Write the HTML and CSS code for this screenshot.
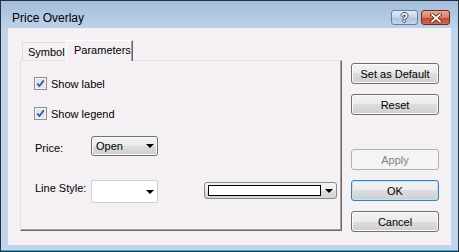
FILE: index.html
```html
<!DOCTYPE html>
<html lang="en">
<head>
  <meta charset="UTF-8">
  <title>Price Overlay</title>
  <link rel="stylesheet" href="styles.css">
</head>
<body>
<!-- Dialog Window -->
<div class="window">

    <!-- Title Bar -->
    <div class="titlebar">
        <span class="title">Price Overlay</span>
        <div class="caption-buttons">
            <span class="cap-btn help">?</span>
            <span class="cap-btn close">
                <svg width="12" height="10" viewBox="0 0 12 10">
                    <path d="M2 1.5 L10 8.5 M10 1.5 L2 8.5" stroke="#5a1e16" stroke-width="3.4" stroke-linecap="square"/>
                    <path d="M2 1.5 L10 8.5 M10 1.5 L2 8.5" stroke="#ffffff" stroke-width="1.8" stroke-linecap="square"/>
                </svg>
            </span>
        </div>
    </div>

    <!-- Client Area -->
    <div class="client">
        <div class="tabset">
            <div class="tabs">
                <div class="tab">Symbol</div>
                <div class="tab active">Parameters</div>
            </div>

            <div class="panel">
                <div class="check-row">
                    <svg class="checkbox" width="13" height="13" viewBox="0 0 13 13">
                        <rect x="0.5" y="0.5" width="12" height="12" fill="#f6f6f6" stroke="#8e8f8f"/>
                        <rect x="2" y="2" width="9" height="9" fill="#e2e5ec"/>
                        <path d="M3.3 6.6 L5.4 9 L9.8 3.4" fill="none" stroke="#3552a8" stroke-width="1.7"/>
                    </svg>
                    <span>Show label</span>
                </div>
                <div class="check-row second">
                    <svg class="checkbox" width="13" height="13" viewBox="0 0 13 13">
                        <rect x="0.5" y="0.5" width="12" height="12" fill="#f6f6f6" stroke="#8e8f8f"/>
                        <rect x="2" y="2" width="9" height="9" fill="#e2e5ec"/>
                        <path d="M3.3 6.6 L5.4 9 L9.8 3.4" fill="none" stroke="#3552a8" stroke-width="1.7"/>
                    </svg>
                    <span>Show legend</span>
                </div>

                <div class="field-row price-row">
                    <span class="field-label">Price:</span>
                    <div class="dropbtn">Open<span class="arrow"></span></div>
                </div>

                <div class="field-row style-row">
                    <span class="field-label">Line Style:</span>
                    <div class="combo"><span class="arrow"></span></div>
                    <div class="color-combo">
                        <span class="swatch"></span>
                        <span class="arrow"></span>
                    </div>
                </div>
            </div>
        </div>

        <!-- Dialog Buttons -->
        <div class="actions">
            <div class="btn">Set as Default</div>
            <div class="btn">Reset</div>
            <div class="btn disabled apply">Apply</div>
            <div class="btn default">OK</div>
            <div class="btn">Cancel</div>
        </div>
    </div>
</div>
</body>
</html>
```

FILE: styles.css
```css
/* Page */
html, body {
  margin: 0;
  padding: 0;
}

body {
  font-family: "Liberation Sans", Arial, sans-serif;
  font-size: 11px;
  color: #000;
}

/* Window frame */
.window {
  width: 459px;
  height: 252px;
  box-sizing: border-box;
  border: 1px solid #27323d;
  background: #c1d6ee;
  box-shadow: inset 0 -1px 0 #2cb6da;
  display: flex;
  flex-direction: column;
}

/* Title bar */
.titlebar {
  height: 27px;
  flex: none;
  box-sizing: border-box;
  padding: 6px 8px 0 11px;
  display: flex;
  align-items: center;
  background: linear-gradient(to bottom, #a4bdd8, #bcd2ea);
}

.title {
  flex: 1;
  font-size: 12px;
  padding-top: 1px;
}

.caption-buttons {
  display: flex;
  gap: 3px;
}

.cap-btn {
  height: 15px;
  box-sizing: border-box;
  border-radius: 3px;
  display: flex;
  align-items: center;
  justify-content: center;
}

.help {
  width: 27px;
  border: 1px solid #6b7f98;
  background: linear-gradient(to bottom, #e4edf7, #c3d4e8 50%, #a9c1dc 51%, #c4d7ec);
  color: #fff;
  font-weight: bold;
  font-size: 12px;
  text-shadow: 1px 0 #3d4b5e, -1px 0 #3d4b5e, 0 1px #3d4b5e, 0 -1px #3d4b5e;
}

.close {
  width: 29px;
  border: 1px solid #6e2a20;
  background: linear-gradient(to bottom, #e9ab98, #d77d64 50%, #c2452d 51%, #d66a4e);
}

/* Client area */
.client {
  height: 217px;
  flex: none;
  margin: 0 7px;
  box-sizing: border-box;
  padding: 12px 0 0 12px;
  background: #f4f0f4;
  display: flex;
}

/* Tabs */
.tabset {
  width: 322px;
}

.tabs {
  height: 20px;
  padding-left: 2px;
  display: flex;
  align-items: flex-end;
}

.tab {
  height: 18px;
  box-sizing: border-box;
  padding-left: 5px;
  width: 46px;
  flex: none;
  border-left: 1px solid #dcdcdc;
  border-top: 1px solid #dcdcdc;
  display: flex;
  align-items: center;
  white-space: nowrap;
}

.tab.active {
  position: relative;
  z-index: 1;
  width: 67px;
  height: 21px;
  margin: 0 0 -1px -2px;
  padding: 0 0 2px 7px;
  background: #f4f0f4;
  border-left: 1px solid #ffffff;
  border-top: 1px solid #ffffff;
  border-right: 1px solid #696969;
  box-shadow: inset -1px 0 0 #a0a0a0;
}

.panel {
  height: 171px;
  box-sizing: border-box;
  padding: 16px 0 0 13px;
  border-top: 1px solid #e2e2e2;
  border-left: 1px solid #e2e2e2;
  border-right: 1px solid #696969;
  border-bottom: 1px solid #696969;
  box-shadow: inset -1px -1px 0 #a0a0a0;
}

/* Checkboxes */
.check-row {
  height: 13px;
  display: flex;
  align-items: center;
  gap: 4px;
}

.check-row.second {
  margin-top: 17px;
}

.checkbox {
  flex: none;
}

/* Fields */
.field-row {
  display: flex;
  align-items: flex-start;
}

.price-row {
  margin-top: 16px;
  height: 20px;
}

.price-row .field-label {
  margin-top: 6px;
}

.style-row {
  margin-top: 24px;
  height: 23px;
}

.style-row .field-label {
  margin-top: 2px;
}

.field-label {
  width: 56px;
  padding-left: 1px;
  line-height: 13px;
}

.arrow {
  width: 0;
  height: 0;
  border-top: 4px solid #000;
  border-left: 4px solid transparent;
  border-right: 4px solid transparent;
}

.dropbtn {
  width: 67px;
  height: 20px;
  box-sizing: border-box;
  padding: 0 3px 0 4px;
  border: 1px solid #707070;
  border-radius: 3px;
  background: linear-gradient(to bottom, #f2f2f2, #ebebeb 50%, #dddddd 50%, #cfcfcf);
  box-shadow: inset 0 0 0 1px #fbfbfb;
  display: flex;
  align-items: center;
  justify-content: space-between;
}

.combo {
  width: 67px;
  height: 23px;
  box-sizing: border-box;
  padding-right: 3px;
  border: 1px solid #d2d0d2;
  border-radius: 2px;
  background: #fff;
  display: flex;
  align-items: center;
  justify-content: flex-end;
}

.color-combo {
  width: 133px;
  height: 17px;
  margin: 2px 0 0 46px;
  box-sizing: border-box;
  padding: 0 3px 0 3px;
  border: 1px solid #8a8a8a;
  border-radius: 3px;
  background: linear-gradient(to bottom, #f4f4f4, #ebebeb 50%, #dddddd 50%, #d4d4d4);
  display: flex;
  align-items: center;
  justify-content: space-between;
}

.swatch {
  width: 113px;
  height: 11px;
  box-sizing: border-box;
  border: 1px solid #000;
  background: #fff;
}

/* Dialog buttons */
.actions {
  width: 88px;
  margin: 23px 0 0 9px;
  display: flex;
  flex-direction: column;
  gap: 10px;
}

.btn {
  height: 21px;
  box-sizing: border-box;
  border: 1px solid #707070;
  border-radius: 3px;
  background: linear-gradient(to bottom, #f2f2f2, #ebebeb 50%, #dddddd 50%, #cfcfcf);
  box-shadow: inset 0 0 0 1px #fbfbfb;
  display: flex;
  align-items: center;
  justify-content: center;
}

.btn.apply {
  margin-top: 24px;
}

.btn.disabled {
  border-color: #adb2b5;
  background: #f4f4f4;
  box-shadow: none;
  color: #838383;
}

.btn.default {
  border-color: #3c7fb1;
  box-shadow: inset 0 0 0 1px #b9e6f9;
}
```
